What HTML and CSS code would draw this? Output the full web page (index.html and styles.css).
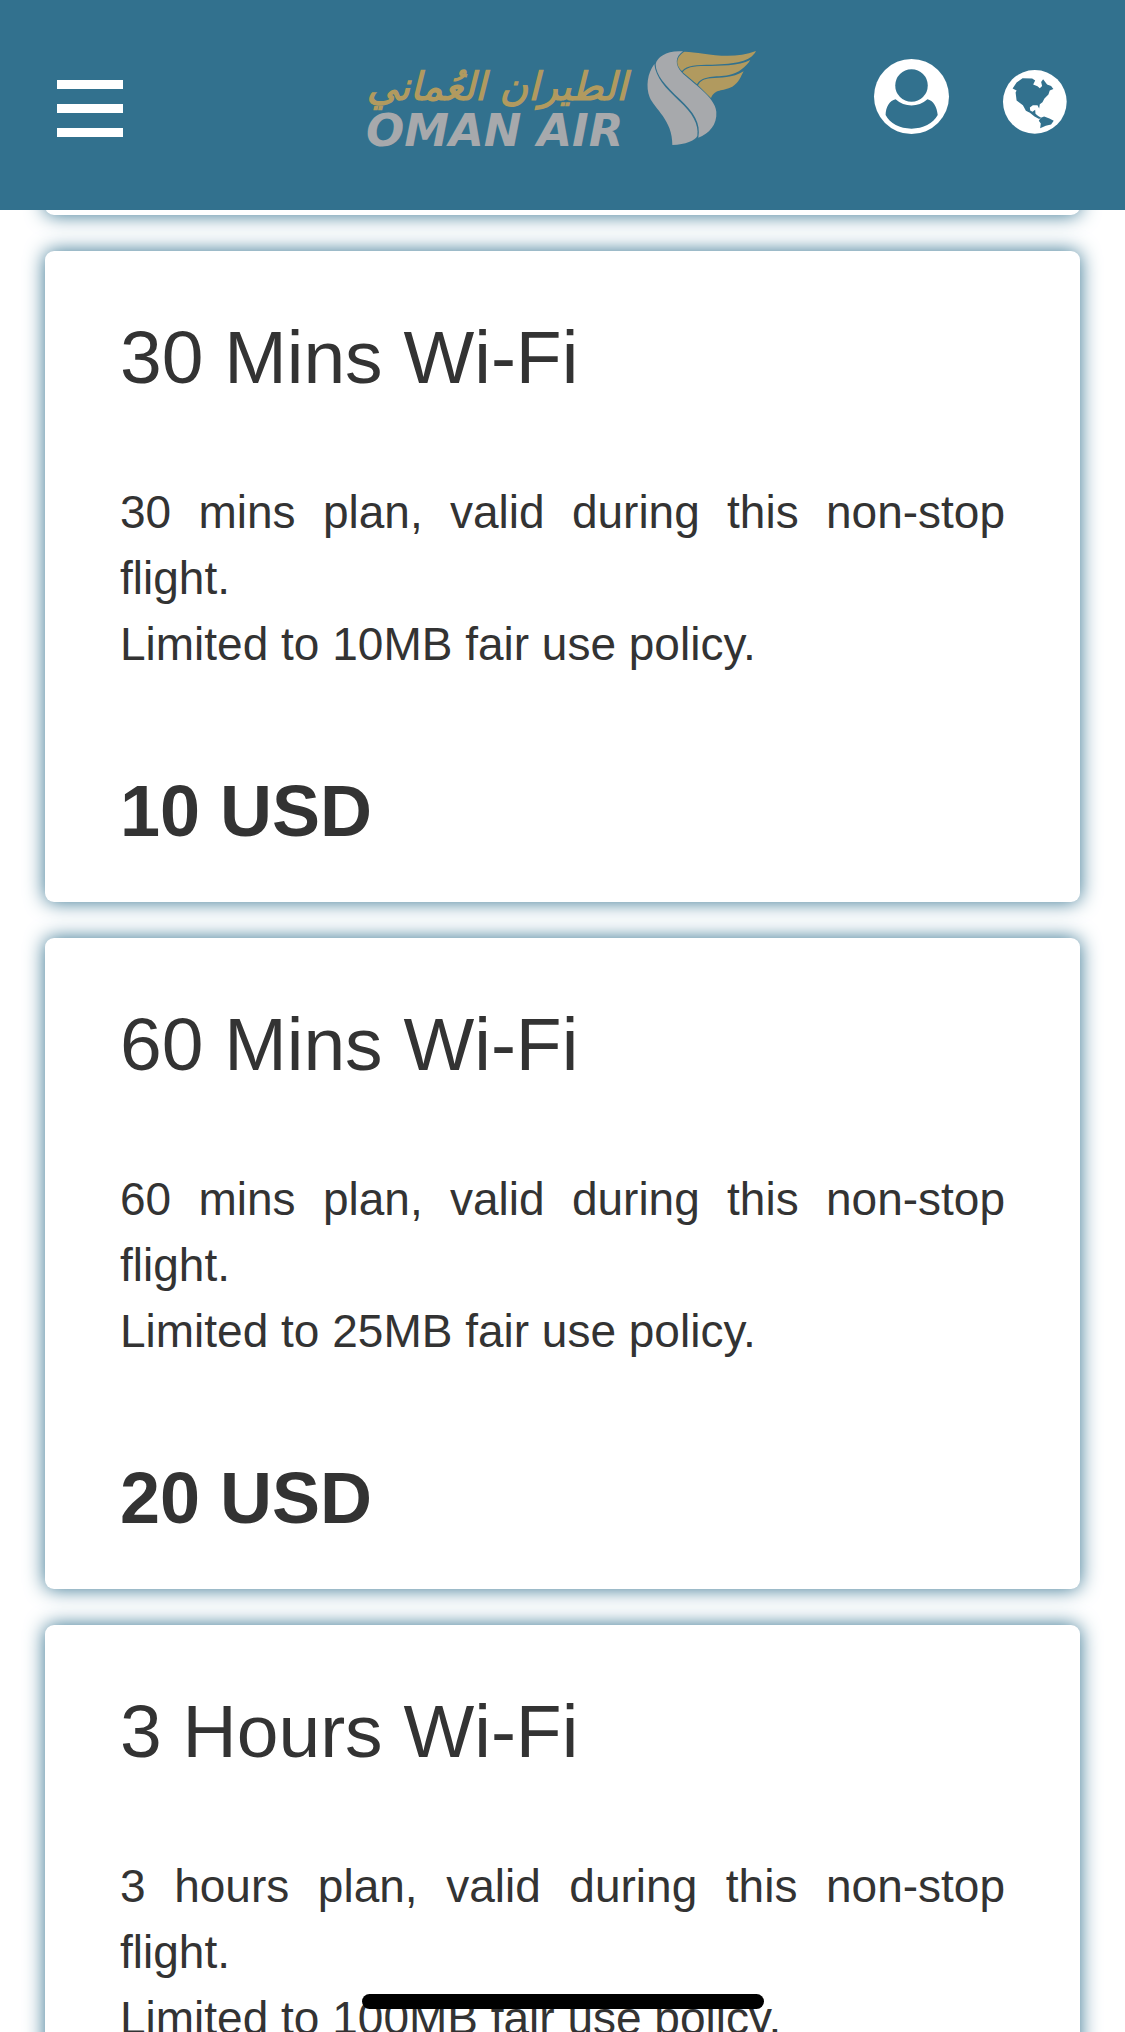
FILE: index.html
```html
<!DOCTYPE html>
<html lang="en">
<head>
<meta charset="utf-8">
<meta name="viewport" content="width=device-width, initial-scale=1">
<title>Oman Air Wi-Fi plans</title>
<link rel="stylesheet" href="styles.css">
</head>
<body>
<header class="topbar">
  <button class="menu" type="button" aria-label="Menu">
    <span class="menu-line"></span>
    <span class="menu-line"></span>
    <span class="menu-line"></span>
  </button>
  <a class="logo" href="#" aria-label="Oman Air">
    <svg viewBox="368 51 390 96" width="390" height="96">
      <text class="logo-arabic" x="628" y="100" direction="rtl" lang="ar">الطيران العُماني</text>
      <text class="logo-latin" x="367" y="146">OMAN AIR</text>
      <g transform="translate(640 40) scale(0.3333)">
        <g fill="#a7a9ac">
          <path d="M46 72C25 100 20 140 32 172C46 207 101 240 100 315C140 314 168 302 175 288C180 252 160 218 120 182C80 145 50 112 46 72Z"/>
          <path d="M132 34C85 30 55 50 50 72C50 105 80 138 122 177C165 217 186 250 178 293C210 280 235 255 232 215C228 170 160 130 127 96C108 76 108 50 132 34Z"/>
        </g>
        <g fill="#b19a5f">
          <path d="M136 35C180 34 270 65 351 33C335 65 290 72 220 74C170 75 145 75 129 93C105 70 115 48 136 35Z"/>
          <path d="M334 60C300 78 240 77 200 78C160 78 142 82 131 97L174 133C190 105 230 112 270 105C300 98 320 82 334 60Z"/>
          <path d="M314 94C280 115 245 113 215 115C195 117 184 122 177 136L216 174C228 145 250 155 280 140C300 128 305 110 314 94Z"/>
        </g>
      </g>
    </svg>
  </a>
  <nav class="actions">
    <button class="action" type="button" aria-label="Account">
      <svg viewBox="72 56 226 226" width="75" height="75">
        <circle cx="185" cy="169" r="113" fill="#fff"/>
        <g fill="#32718e">
          <circle cx="185" cy="136" r="49"/>
          <path d="M137 177C120 180 107 200 107 225C120 250 150 266 185 266C220 266 250 250 264 225C262 200 250 180 233 177C205 202 165 202 137 177Z"/>
        </g>
      </svg>
    </button>
    <button class="action" type="button" aria-label="Language">
      <svg viewBox="459 90 193 193" width="64" height="64">
        <circle cx="555" cy="186" r="96" fill="#fff"/>
        <g fill="#32718e">
          <path d="M488 146L500 128L518 115L547 116L556 122L550 134L563 139L570 145L577 138L574 126L580 118L592 134L604 138L611 147L600 152L596 164L584 176L578 187L570 193L568 206L563 196L549 196L540 203L541 212L548 216L556 210L557 222L565 229L574 234L568 238L554 230L540 219L528 213L519 196L500 182L497 158L500 152Z"/>
          <path d="M573 234L583 230L599 236L612 243L604 254L588 258L571 266L573 251L567 243Z"/>
        </g>
      </svg>
    </button>
  </nav>
</header>
<main class="plans">
  <div class="plan-end"></div>
  <article class="plan">
    <h2 class="plan-title">30 Mins Wi-Fi</h2>
    <p class="plan-text">30 mins plan, valid during this non-stop flight.<br>Limited to 10MB fair use policy.</p>
    <p class="plan-price">10 USD</p>
  </article>
  <article class="plan">
    <h2 class="plan-title">60 Mins Wi-Fi</h2>
    <p class="plan-text">60 mins plan, valid during this non-stop flight.<br>Limited to 25MB fair use policy.</p>
    <p class="plan-price">20 USD</p>
  </article>
  <article class="plan">
    <h2 class="plan-title">3 Hours Wi-Fi</h2>
    <p class="plan-text">3 hours plan, valid during this non-stop flight.<br>Limited to 100MB fair use policy.</p>
  </article>
</main>
<div class="home-bar"></div>
</body>
</html>
```
FILE: styles.css
```css
* {
  box-sizing: border-box;
  margin: 0;
  padding: 0;
}

body {
  display: flex;
  flex-direction: column;
  height: 100vh;
  overflow: hidden;
  background: #fff;
  color: #333;
  font-family: "Liberation Sans", Arial, sans-serif;
}

button {
  border: 0;
  background: none;
  cursor: pointer;
}

svg {
  display: block;
  overflow: visible;
}

.topbar {
  position: relative;
  z-index: 1;
  flex: none;
  display: grid;
  grid-template-columns: 1fr auto 1fr;
  align-items: center;
  height: 210px;
  padding: 0 58px 12px 57px;
  background: #32718e;
}

.menu {
  display: flex;
  flex-direction: column;
  gap: 15px;
  width: 66px;
  padding-top: 18px;
}

.menu-line {
  height: 9px;
  background: #fff;
}

.logo-arabic {
  font: italic bold 39px "DejaVu Sans", sans-serif;
  fill: #b19a5f;
}

.logo-latin {
  font: italic bold 45px "DejaVu Sans", sans-serif;
  fill: #a7a9ac;
}

.actions {
  display: flex;
  justify-content: flex-end;
  align-items: flex-end;
  gap: 54px;
  padding-bottom: 6px;
}

.plans {
  flex: 1;
  min-height: 0;
  display: flex;
  flex-direction: column;
  gap: 36px;
  padding: 0 45px;
  overflow: hidden;
}

.plan,
.plan-end {
  flex: none;
  background: #fff;
  border-radius: 9px;
  box-shadow: 0 0 20px #32718e;
}

.plan-end {
  height: 60px;
  margin-top: -55px;
}

.plan {
  padding: 60px 75px 46px;
}

.plan-title {
  margin-bottom: 76px;
  font-size: 75px;
  font-weight: 400;
  line-height: 92px;
}

.plan-text {
  margin-bottom: 89px;
  font-size: 46px;
  line-height: 66px;
  text-align: justify;
}

.plan-price {
  font-size: 72px;
  font-weight: 700;
  line-height: 90px;
}

.home-bar {
  position: fixed;
  bottom: 23px;
  left: 50%;
  width: 402px;
  height: 15px;
  border-radius: 8px;
  background: #000;
  transform: translateX(-50%);
}
```
